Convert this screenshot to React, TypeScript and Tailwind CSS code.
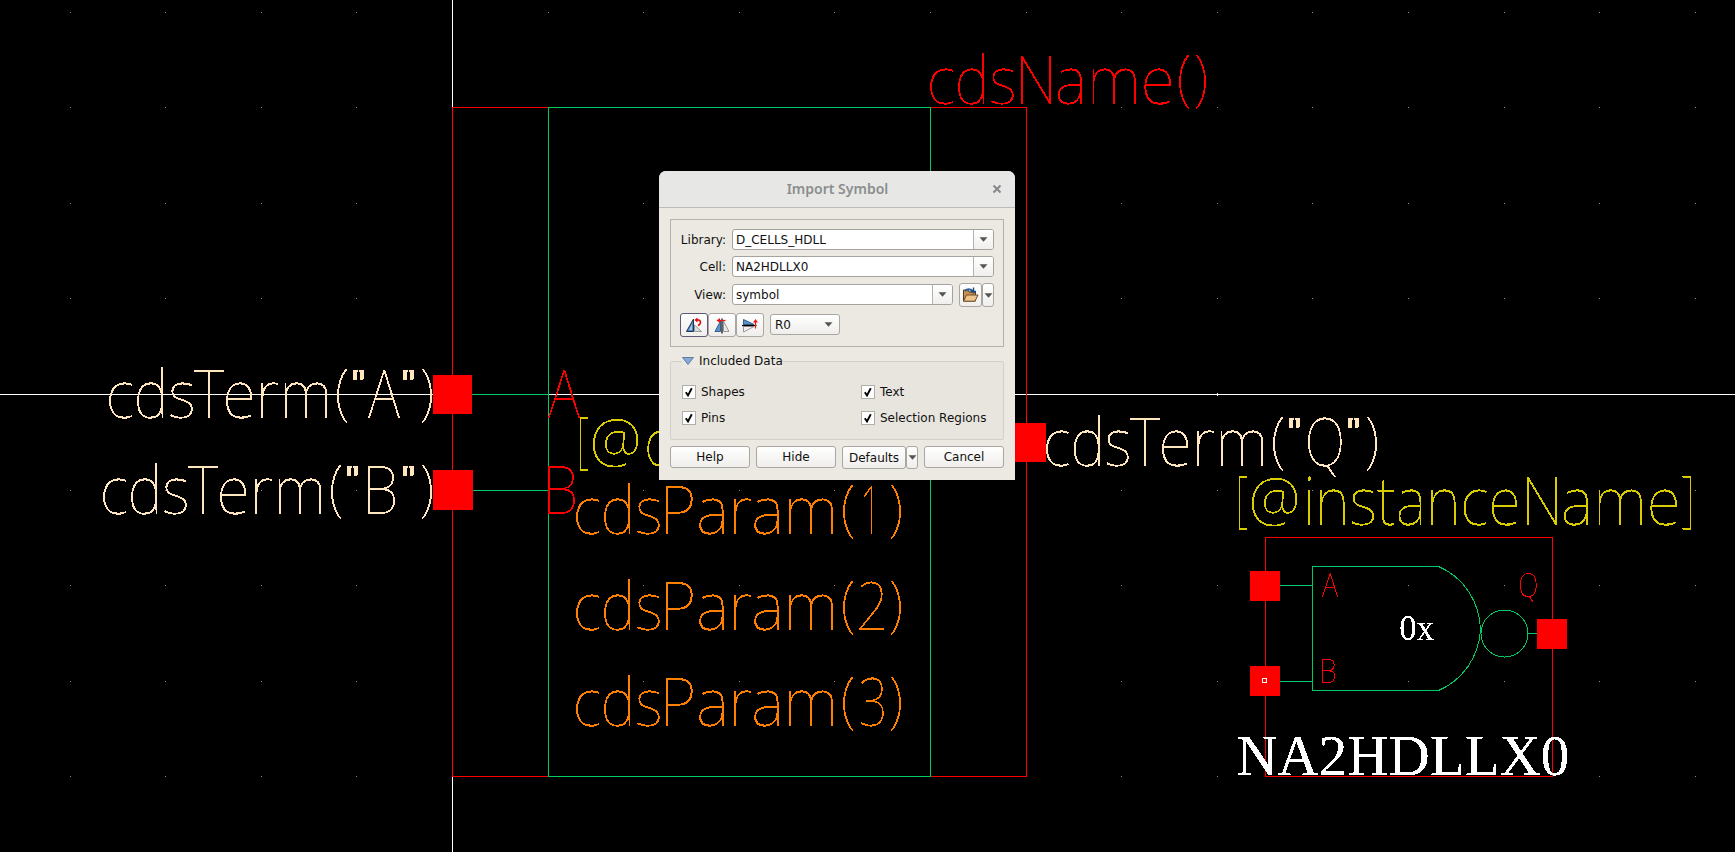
import type { ReactNode } from "react";

/* Left bearing, right ink edge and advance of each glyph run, in 1/1000 em. */
const METRICS: Record<string, [number, number, number]> = {
  cds: [55, 1472, 1513],
  T: [5, 505, 505],
  erm: [55, 1688, 1767],
  Param: [98, 2725, 2802],
  N: [98, 602, 698],
  ame: [50, 1842, 1903],
  instance: [67, 3592, 3653],
  "(": [40, 230, 255],
  ")": [25, 215, 255],
  '"': [57, 420, 479],
  A: [0, 577, 577],
  B: [100, 558, 613],
  Q: [62, 700, 754],
  "1": [100, 325, 570],
  "2": [50, 500, 570],
  "3": [50, 500, 570],
  "[": [85, 290, 313],
  "]": [20, 228, 313],
  "@": [50, 825, 878],
  c: [52, 440, 472],
  "0x": [24, 1000, 1000],
  NA2HDLLX0: [12, 5808, 5832],
};

/* Glyphs set at a size and baseline of their own: font size, baseline shift, weight. */
const SPECIAL: Record<string, [number, number, number]> = {
  '"': [39, -20, 700],
  "(": [61, -5, 100],
  ")": [61, -5, 100],
  "[": [61, -5, 100],
  "]": [61, -5, 100],
  "@": [59, -5, 100],
};

type Run = [text: string, left: number, right: number];

function Label({ runs, y, fill, size = 66, serif = false }: { runs: Run[]; y: number; fill: string; size?: number; serif?: boolean }) {
  return (
    <text fill={fill} className={serif ? "font-['Liberation_Serif',serif]" : "font-['Noto_Sans',sans-serif] font-thin"}>
      {runs.map(([text, left, right], i) => {
        const [lsb, ink, adv] = METRICS[text];
        const k = (right - left) / (ink - lsb);
        const [fontSize, shift, weight] = SPECIAL[text] ?? [size, 0, undefined];
        return (
          <tspan
            key={i}
            x={left - lsb * k}
            y={y + shift}
            fontSize={fontSize}
            fontWeight={weight}
            textLength={adv * k}
            lengthAdjust="spacingAndGlyphs"
          >
            {text}
          </tspan>
        );
      })}
    </text>
  );
}

const GRID_X = [70, 165, 261, 356, 452, 548, 643, 739, 834, 930, 1026, 1121, 1217, 1312, 1408, 1504, 1599, 1695];
const GRID_Y = [12, 107, 203, 298, 394, 490, 585, 681, 776];

const RED = "#ff0000";
const GREEN = "#00cc66";
const TAN = "#ffe6bf";
const YELLOW = "#d9cc00";
const ORANGE = "#ff8000";

/* Hard-edged text layer painted in a single colour. */
function Layer({ id, color, children }: { id: string; color: string; children: ReactNode }) {
  return (
    <>
      <filter id={id} x="0" y="0" width="1735" height="852" filterUnits="userSpaceOnUse" colorInterpolationFilters="sRGB">
        <feComponentTransfer in="SourceGraphic" result="mask">
          <feFuncA type="discrete" tableValues="0 0 1 1 1" />
        </feComponentTransfer>
        <feFlood floodColor={color} />
        <feComposite operator="in" in2="mask" />
      </filter>
      <g filter={`url(#${id})`}>{children}</g>
    </>
  );
}

function Schematic() {
  return (
    <svg width="1735" height="852" viewBox="0 0 1735 852" className="block">
      <g fill="#8a8a8a">
        {GRID_Y.map((y) => GRID_X.map((x) => <rect key={`${x}-${y}`} x={x} y={y} width="1" height="1" />))}
      </g>
      <g fill="#fff">
        <rect x="452" y="0" width="1" height="852" />
        <rect x="0" y="394" width="1735" height="1" />
        <rect x="1217" y="393" width="1" height="3" />
      </g>
      <g fill="none" shapeRendering="crispEdges">
        <rect x="452.5" y="107.5" width="574" height="669" stroke={RED} />
        <rect x="548.5" y="107.5" width="382" height="669" stroke={GREEN} />
        <path d="M472 394.5H548M473 490.5H548" stroke={GREEN} />
        <rect x="1265.5" y="537.5" width="287" height="239" stroke={RED} />
        <path d="M1280 585.5H1312M1280 681.5H1312M1528 633.5H1538M1437.5 566.5H1312.5V690.5H1437.5" stroke={GREEN} />
        <path d="M1438.5 566.5A67 70 0 0 1 1480.5 630A67 70 0 0 1 1438.5 690.5" stroke={GREEN} />
        <circle cx="1504.5" cy="633.5" r="23.5" stroke={GREEN} />
      </g>
      <g fill={RED}>
        <rect x="433" y="375" width="39" height="39" />
        <rect x="433" y="470" width="40" height="40" />
        <rect x="1007" y="423" width="39" height="39" />
        <rect x="1250" y="571" width="30" height="30" />
        <rect x="1250" y="666" width="30" height="30" />
        <rect x="1537" y="619" width="30" height="30" />
      </g>
      <rect x="1262.5" y="678.5" width="4" height="4" fill="none" stroke="#fff" />
      <Layer id="red-text" color={RED}>
        <Label y={104} fill={RED} runs={[["cds", 930, 1014], ["N", 1021, 1051], ["ame", 1058, 1171], ["(", 1179, 1190], [")", 1195, 1206]]} />
        <Label y={418} fill={RED} runs={[["A", 548, 580]]} />
        <Label y={514} fill={RED} runs={[["B", 548, 575]]} />
        <Label y={597} size={34} fill={RED} runs={[["A", 1322, 1338]]} />
        <Label y={597} size={34} fill={RED} runs={[["Q", 1520, 1537]]} />
        <Label y={683} size={34} fill={RED} runs={[["B", 1322, 1335]]} />
      </Layer>
      <Layer id="tan-text" color={TAN}>
        <Label y={418} fill={TAN} runs={[["cds", 109, 193], ["T", 194, 224], ["erm", 226, 327], ["(", 337, 348], ['"', 353, 364], ["A", 368, 400], ['"', 403, 414], [")", 421, 432]]} />
        <Label y={514} fill={TAN} runs={[["cds", 103, 187], ["T", 188, 218], ["erm", 220, 321], ["(", 331, 342], ['"', 347, 358], ["B", 368, 395], ['"', 403, 414], [")", 421, 432]]} />
        <Label y={466} fill={TAN} runs={[["cds", 1046, 1129], ["T", 1130, 1160], ["erm", 1162, 1263], ["(", 1273, 1284], ['"', 1289, 1300], ["Q", 1308, 1342], ['"', 1348, 1359], [")", 1366, 1377]]} />
      </Layer>
      <Layer id="yellow-text" color={YELLOW}>
        <Label y={466} fill={YELLOW} runs={[["[", 580, 588], ["@", 593, 638], ["c", 647, 668]]} />
        <Label y={525} fill={YELLOW} runs={[["[", 1239, 1247], ["@", 1252, 1297], ["instance", 1307, 1517], ["N", 1527, 1557], ["ame", 1564, 1677], ["]", 1682, 1691]]} />
      </Layer>
      <Layer id="orange-text" color={ORANGE}>
        <Label y={534} fill={ORANGE} runs={[["cds", 576, 660], ["Param", 666, 833], ["(", 843, 854], ["1", 864, 872], [")", 890, 901]]} />
        <Label y={630} fill={ORANGE} runs={[["cds", 576, 660], ["Param", 666, 833], ["(", 843, 854], ["2", 859, 885], [")", 890, 901]]} />
        <Label y={726} fill={ORANGE} runs={[["cds", 576, 660], ["Param", 666, 833], ["(", 843, 854], ["3", 861, 884], [")", 890, 901]]} />
      </Layer>
      <Layer id="white-text" color="#fff">
        <Label y={640} size={36} serif fill="#fff" runs={[["0x", 1400, 1434]]} />
        <Label y={775} size={58} serif fill="#fff" runs={[["NA2HDLLX0", 1237, 1568]]} />
      </Layer>
    </svg>
  );
}

function Caret() {
  return (
    <svg width="9" height="5" viewBox="0 0 9 5" className="shrink-0">
      <path d="M0.5 0.3H8.5L4.5 4.8Z" fill="#555" />
    </svg>
  );
}

function Combo({ value, className }: { value: string; className: string }) {
  return (
    <div className={`flex h-[21px] rounded-[3px] border border-[#a5a39e] bg-white ${className}`}>
      <span className="flex-1 pl-[3px] leading-[20px]">{value}</span>
      <span className="flex w-5 items-center justify-center rounded-r-[2px] border-l border-[#b4b2ad] bg-gradient-to-b from-white to-[#f0efed]">
        <Caret />
      </span>
    </div>
  );
}

function Row({ label, children }: { label: string; children: ReactNode }) {
  return (
    <div className="flex items-center">
      <span className="w-[49px] text-right leading-[18px]">{label}</span>
      <div className="ml-[6px] flex items-center">{children}</div>
    </div>
  );
}

const BUTTON = "flex items-center rounded-[3px] border border-[#a9a7a2] bg-gradient-to-b from-white to-[#efeeeb]";

function Check({ label }: { label: string }) {
  return (
    <label className="flex items-center gap-[5px]">
      <span className="flex size-[14px] items-center justify-center border border-[#b0aea9] bg-white">
        <svg width="10" height="10" viewBox="0 0 10 10">
          <path d="M1.8 5.2L4 8.4L7.8 1.2" fill="none" stroke="#000" strokeWidth="1.9" />
        </svg>
      </span>
      <span className="leading-[14px]">{label}</span>
    </label>
  );
}

function RotateIcon() {
  return (
    <svg width="18" height="16" viewBox="0 0 18 16">
      <path d="M8.5 2V14.5H1.5Z" fill="#4f86c0" stroke="#1d3550" />
      <path d="M7 7V13H4Z" fill="#a9cbee" />
      <path d="M9.5 8L16.5 14.5H9.5Z" fill="#ddd" stroke="#999" />
      <path d="M11.5 3H13.5Q15.5 3.2 15.5 5.5Q15.4 7.5 13 8.5" fill="none" stroke="#e00000" strokeWidth="1.5" />
      <path d="M9.5 3L12.5 0.5V5.5Z" fill="#e00000" />
    </svg>
  );
}

function MirrorIcon({ vertical = false }: { vertical?: boolean }) {
  if (vertical) {
    return (
      <svg width="18" height="17" viewBox="0 0 18 17">
        <path d="M2.5 2.5V7.5H13Z" fill="#5b92cc" stroke="#35618f" />
        <path d="M2.5 9.5V15L13 9.5Z" fill="#f2f2f2" stroke="#999" />
        <path d="M1 8.5H15.5" stroke="#000" strokeWidth="1.2" />
        <path d="M14.5 4V11.5" stroke="#e81818" strokeWidth="1.2" />
        <path d="M14.5 2L17 5.5H12Z" fill="#e81818" />
      </svg>
    );
  }
  return (
    <svg width="18" height="17" viewBox="0 0 18 17">
      <path d="M7.5 4V14.5H2Z" fill="#5b92cc" stroke="#35618f" />
      <path d="M10.5 4V14.5H16Z" fill="#e6e6e6" stroke="#999" />
      <path d="M9 1.5V16.5" stroke="#000" strokeWidth="1.2" />
      <path d="M6 3.5H12.5" stroke="#e81818" strokeWidth="1.2" />
      <path d="M3.5 3.5L7 1V6Z" fill="#e81818" />
    </svg>
  );
}

function FolderIcon() {
  return (
    <svg width="17" height="16" viewBox="0 0 17 16">
      <path d="M1.5 14V3H6L7 5H13.5V14Z" fill="#c98f4e" stroke="#4a3a2a" />
      <path d="M3 4Q7 0 12 5" fill="none" stroke="#2c5f95" strokeWidth="2" />
      <path d="M11.5 0.5V6.5M8.5 4.5H14" stroke="#1d4a7c" strokeWidth="1.4" />
      <path d="M1.5 14.2L4.5 8H16L13 14.2Z" fill="#efc48b" stroke="#6b4a26" />
    </svg>
  );
}

function ImportDialog() {
  return (
    <div className="absolute left-[659px] top-[171px] flex h-[309px] w-[356px] flex-col overflow-hidden rounded-t-[7px] bg-[#ebe9e2] font-['DejaVu_Sans',sans-serif] text-[12px] text-[#111]">
      <header className="flex h-[37px] shrink-0 items-center border-b border-[#bcbcba] bg-[#e7e7e5] pr-[13px]">
        <h1 className="flex-1 pb-px pl-6 text-center font-['Noto_Sans',sans-serif] text-[14px] font-semibold text-[#8b8e8f]">Import Symbol</h1>
        <svg width="10" height="10" viewBox="0 0 10 10">
          <path d="M1.5 1.5L8.5 8.5M8.5 1.5L1.5 8.5" stroke="#85888a" strokeWidth="2" />
        </svg>
      </header>
      <div className="flex flex-col px-[11px] pt-[11px]">
        <section className="flex h-[128px] flex-col border border-[#b3b1ac] pl-[6px] pt-[9px]">
          <Row label="Library:">
            <Combo value="D_CELLS_HDLL" className="w-[262px]" />
          </Row>
          <div className="mt-[6px]">
            <Row label="Cell:">
              <Combo value="NA2HDLLX0" className="w-[262px]" />
            </Row>
          </div>
          <div className="mt-[6px]">
            <Row label="View:">
              <Combo value="symbol" className="-mt-px w-[221px]" />
              <button className={`${BUTTON} ml-[6px] h-6 w-[23px] justify-center`}>
                <FolderIcon />
              </button>
              <button className={`${BUTTON} h-6 w-3 justify-center`}>
                <Caret />
              </button>
            </Row>
          </div>
          <div className="mt-[6px] flex items-start pl-[3px]">
            <button className="flex h-6 w-7 items-center justify-center rounded-[3px] border border-[#5f5878] bg-gradient-to-b from-white to-[#efeeeb]">
              <RotateIcon />
            </button>
            <button className={`${BUTTON} h-6 w-7 justify-center`}>
              <MirrorIcon />
            </button>
            <button className={`${BUTTON} h-6 w-7 justify-center`}>
              <MirrorIcon vertical />
            </button>
            <button className={`${BUTTON} ml-[6px] mt-px h-[21px] w-[70px] justify-between pl-1 pr-[6px]`}>
              <span>R0</span>
              <Caret />
            </button>
          </div>
        </section>
        <fieldset className="mt-[7px] h-[86px] rounded-[2px] border border-[#d2d0ca] bg-[#e8e5df] px-[11px]">
          <legend className="flex items-center gap-[5px] bg-[#ebe9e2] px-0 leading-[14px]">
            <svg width="12" height="8" viewBox="0 0 12 8">
              <path d="M0.5 0.5H11.5L6 7.5Z" fill="#86a9d6" stroke="#4c6a94" strokeWidth="0.8" />
            </svg>
            <span>Included Data</span>
          </legend>
          <div className="grid grid-cols-[179px_1fr] gap-y-3 whitespace-nowrap pt-[17px]">
            <Check label="Shapes" />
            <Check label="Text" />
            <Check label="Pins" />
            <Check label="Selection Regions" />
          </div>
        </fieldset>
        <footer className="mt-[6px] flex">
          <button className={`${BUTTON} h-[22px] w-20 justify-center`}>Help</button>
          <button className={`${BUTTON} ml-[6px] h-[22px] w-20 justify-center`}>Hide</button>
          <button className={`${BUTTON} ml-[6px] h-[23px] w-16 justify-center`}>Defaults</button>
          <button className={`${BUTTON} h-[23px] w-3 justify-center`}>
            <Caret />
          </button>
          <button className={`${BUTTON} ml-[6px] h-[22px] w-20 justify-center`}>Cancel</button>
        </footer>
      </div>
    </div>
  );
}

export default function App() {
  return (
    <main className="relative h-[852px] w-[1735px] overflow-hidden bg-black">
      <Schematic />
      <ImportDialog />
    </main>
  );
}
